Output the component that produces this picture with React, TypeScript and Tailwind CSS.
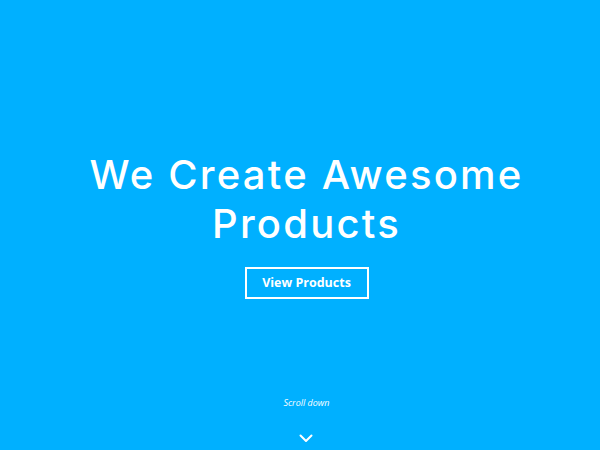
import React from 'react';

const App: React.FC = () => {
  return (
    <div className="h-[450px] w-full bg-[#00b0ff] text-white flex flex-col items-center overflow-hidden pl-[13px]">
      {/* Hero */}
      <div className="flex flex-col items-center pt-[150px]">
        <h1 className="text-center font-['Inter',sans-serif] font-medium text-[40px] leading-[49px] tracking-[2.2px]">
          We Create Awesome
          <br />
          Products
        </h1>
        <button className="mt-[19px] w-[124px] h-[32px] border-2 border-white font-['Open_Sans',sans-serif] font-bold text-[12.5px] text-white">
          View Products
        </button>
      </div>

      {/* Scroll hint */}
      <div className="mt-auto flex flex-col items-center pb-[7px]">
        <span className="font-['Open_Sans',sans-serif] italic text-[9px] leading-[12px]">Scroll down</span>
        <svg className="mt-[25px]" width="14" height="9" viewBox="0 0 14 9" fill="none">
          <path d="M1.5 1.5L7 7l5.5-5.5" stroke="white" strokeWidth="2" strokeLinecap="round" strokeLinejoin="round" />
        </svg>
      </div>
    </div>
  );
};

export default App;
